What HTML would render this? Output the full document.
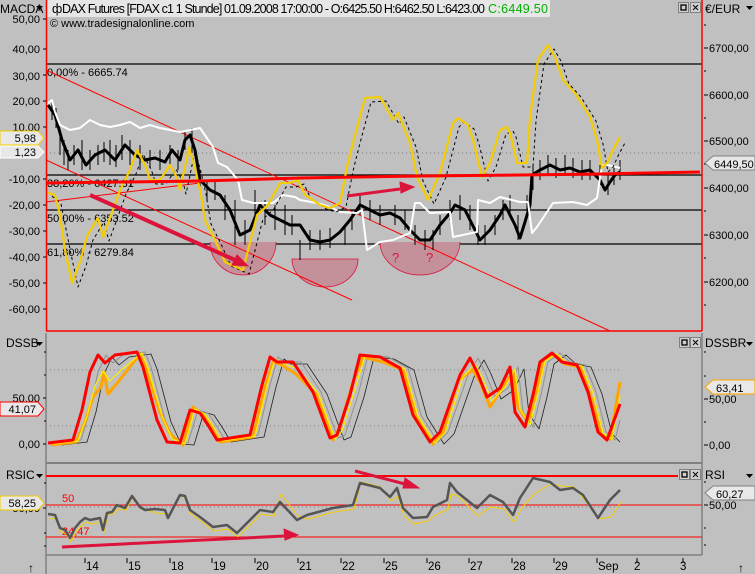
<!DOCTYPE html>
<html><head><meta charset="utf-8">
<style>
html,body{margin:0;padding:0;background:#c0c0c0;}
body{width:755px;height:574px;overflow:hidden;}
svg{display:block;font-family:"Liberation Sans",sans-serif;}
polyline{stroke-linejoin:round;}
</style></head>
<body>
<svg width="755" height="574" viewBox="0 0 755 574" xmlns="http://www.w3.org/2000/svg">
<rect width="755" height="574" fill="#c0c0c0"/>
<!-- header -->
<rect x="47" y="0" width="503" height="17" fill="#e6e6e6"/>
<text x="0" y="13" font-size="12">MACDA</text>
<path d="M36,6 h7 l-3.5,4z" fill="#000"/>
<text x="52" y="13" font-size="12.5">ф</text>
<text x="62" y="13" font-size="12.5" textLength="423" lengthAdjust="spacing">DAX Futures [FDAX c1  1 Stunde] 01.09.2008 17:00:00 - O:6425.50 H:6462.50 L:6423.00</text>
<text x="488" y="13" font-size="12.5" fill="#00b000" textLength="60" lengthAdjust="spacing">C:6449.50</text>
<g fill="#d0d0d0" stroke="#808080"><rect x="678.5" y="2.5" width="10" height="10"/><rect x="690.5" y="2.5" width="10" height="10"/></g>
<rect x="681" y="5" width="5" height="5" fill="none" stroke="#000" stroke-width="1.3"/>
<path d="M693,5 l5,5 M698,5 l-5,5" stroke="#000"/>
<text x="705" y="13" font-size="12">€/EUR</text>
<path d="M746,6 h7 l-3.5,4z" fill="#000"/>

<!-- main pane -->
<text x="50" y="27" font-size="11">© www.tradesignalonline.com</text>
<g stroke="#000" stroke-width="1.2">
<line x1="46" y1="64" x2="702" y2="64"/>
<line x1="46" y1="175" x2="702" y2="175"/>
<line x1="46" y1="210" x2="702" y2="210"/>
<line x1="46" y1="244" x2="702" y2="244"/>
</g>
<line x1="46" y1="153" x2="702" y2="153" stroke="#808080" stroke-dasharray="1,3"/>
<g font-size="11">
<text x="47" y="76">0,00% - 6665.74</text>
<text x="47" y="187">38,20% - 6427.31</text>
<text x="47" y="222">50,00% - 6353.52</text>
<text x="47" y="256">61,80% - 6279.84</text>
</g>
<g fill="#c4909a" stroke="#dc143c" stroke-width="0.8">
<path d="M210,242 A33,33 0 0 0 276,242"/>
<path d="M292,259 A33,28 0 0 0 358,259 Z"/>
<path d="M380,242 A40,33 0 0 0 460,242"/>
</g>
<text x="392" y="262" font-size="13" fill="#dc143c">?</text>
<text x="426" y="262" font-size="13" fill="#dc143c">?</text>
<g stroke="#ff0000" stroke-width="1" fill="none">
<line x1="46" y1="70" x2="610" y2="331"/>
<line x1="46" y1="160" x2="352" y2="300"/>
<line x1="46" y1="202" x2="200" y2="183"/>
</g>
<!-- price candles approx -->
<g stroke="#000" stroke-width="1">
<path d="M52,100v20M56,108v20M60,130v25M64,140v25M68,150v20M74,145v20M82,140v30M90,150v20M98,145v20M104,142v20M110,140v25M116,145v22M122,135v25M130,140v25M140,145v25M150,150v18M160,150v20M170,145v20M178,150v20M185,130v20M192,128v25M200,170v20M207,180v20M215,180v20M225,195v25M235,200v45M245,220v25M255,190v30M265,200v25M275,205v25M285,205v30M292,215v20M300,240v20M310,230v20M320,230v20M330,228v20M345,225v20M352,210v20M360,195v20M370,200v20M380,205v20M395,205v20M405,210v20M415,225v20M425,230v20M433,230v20M440,215v20M450,200v20M460,195v25M470,205v25M478,225v20M485,225v20M495,215v20M503,200v20M510,195v20M518,215v25M527,195v20M533,165v25M540,160v20M548,155v20M556,158v20M565,155v20M573,158v20M582,160v20M590,160v20M600,165v20M608,175v20M614,165v20M620,160v20"/>
</g>
<polyline fill="none" stroke="#000" stroke-width="3" points="48,105 55,115 62,140 70,160 78,150 86,165 95,155 105,150 115,160 125,145 135,155 145,160 155,158 165,162 172,150 180,160 185,140 190,135 195,150 200,180 210,190 220,195 230,210 240,235 250,230 260,205 270,215 280,220 290,225 300,225 310,240 320,242 330,240 340,232 350,220 360,205 370,210 380,215 390,213 400,218 410,230 420,240 430,240 440,225 450,213 455,205 465,210 470,220 480,240 490,230 500,215 505,205 515,225 520,238 525,222 530,205 532,175 540,170 550,165 560,170 570,168 580,172 590,170 600,180 605,190 610,182 615,175 620,172"/>
<!-- white line -->
<polyline fill="none" stroke="#fff" stroke-width="2" points="46,105 52,100 55,112 60,125 70,130 80,128 90,120 100,125 110,127 120,125 130,122 140,128 150,125 160,128 170,130 180,132 200,128 213,147 218,163 227,167 238,180 242,200 253,203 273,203 283,195 295,197 300,200 317,203 330,207 340,212 357,213 362,210 367,250 380,242 393,240 410,233 415,203 420,203 430,213 450,212 453,237 477,232 478,200 490,203 500,197 520,202 528,202 532,233 537,227 553,203 573,202 587,205 597,198 602,165 608,165 620,168"/>
<!-- macd yellow + dashed -->
<polyline fill="none" stroke="#000" stroke-width="1" stroke-dasharray="3,3" transform="translate(6,4)" points="46,192 55,200 65,250 72,283 80,262 87,236 98,218 103,237 110,218 120,190 130,170 137,150 145,165 150,180 160,180 170,165 177,178 180,190 189,147 195,168 200,190 205,220 215,240 225,262 243,270 257,215 268,205 280,183 290,183 298,180 305,195 313,200 320,205 330,208 340,203 347,167 353,143 365,98 380,97 393,120 398,113 410,143 417,177 428,200 440,173 453,123 458,118 468,125 473,140 482,177 490,163 500,130 507,127 510,133 517,163 527,163 530,117 538,60 548,45 555,57 563,80 575,93 590,117 597,140 602,168 607,163 613,150 620,137"/>
<polyline fill="none" stroke="#f5cc00" stroke-width="2.2" points="46,192 55,195 60,215 65,250 72,283 80,262 87,236 98,218 103,237 110,218 120,190 130,170 137,150 145,165 150,180 160,180 170,165 177,178 180,190 189,147 195,168 200,190 205,220 215,240 225,262 243,270 257,215 268,205 280,183 290,183 298,180 305,195 313,200 320,205 330,208 340,203 347,167 353,143 365,98 380,97 393,120 398,113 410,143 417,177 428,200 440,173 453,123 458,118 468,125 473,140 482,177 490,163 500,130 507,127 510,133 517,163 527,163 530,117 538,60 548,45 555,57 563,80 575,93 590,117 597,140 602,168 607,163 613,150 620,137"/>
<polyline fill="none" stroke="#ff0000" stroke-width="3" points="46,183 200,181 300,178 420,176 520,175 600,174 700,172"/>
<g stroke="#dc143c" stroke-width="4" fill="#dc143c">
<line x1="90" y1="195" x2="235" y2="260"/>
<path d="M248,266 l-16,-1 l5,-10z" stroke-width="1"/>
<line x1="347" y1="196" x2="400" y2="189" stroke-width="3"/>
<path d="M414,187 l-14,-5 l1,11z" stroke-width="1"/>
</g>
<g stroke="#ff0000" stroke-width="1.5" fill="none">
<line x1="46.5" y1="0" x2="46.5" y2="331"/>
<line x1="702" y1="0" x2="702" y2="331"/>
<line x1="46" y1="331" x2="702" y2="331"/>
</g>
<g font-size="11" text-anchor="end">
<text x="40" y="23">50,00</text><text x="40" y="53">40,00</text><text x="40" y="80">30,00</text>
<text x="40" y="105">20,00</text><text x="40" y="131">10,00</text><text x="40" y="183">-10,00</text>
<text x="40" y="209">-20,00</text><text x="40" y="235">-30,00</text><text x="40" y="261">-40,00</text>
<text x="40" y="287">-50,00</text><text x="40" y="313">-60,00</text>
</g>
<path d="M43,19h3M43,49h3M43,75h3M43,101h3M43,127h3M43,179h3M43,205h3M43,231h3M43,257h3M43,283h3M43,309h3" stroke="#000"/>
<path d="M0,131 h38 l6,7 l-6,7 h-38z" fill="#e8e8e8" stroke="#f5cc00"/>
<text x="36" y="142" font-size="11" text-anchor="end">5,98</text>
<path d="M0,146 h38 l6,6 l-6,6 h-38z" fill="#e8e8e8" stroke="#fff"/>
<text x="36" y="156" font-size="11" text-anchor="end">1,23</text>
<g font-size="11">
<text x="709" y="52">6700,00</text><text x="709" y="99">6600,00</text><text x="709" y="145">6500,00</text>
<text x="709" y="192">6400,00</text><text x="709" y="239">6300,00</text><text x="709" y="286">6200,00</text>
</g>
<path d="M704,48h4M704,95h4M704,141h4M704,188h4M704,235h4M704,282h4M704,25h2M704,71h2M704,118h2M704,164h2M704,211h2M704,258h2M704,305h2" stroke="#000"/>
<path d="M705,163 l8,-7 h42 v14 h-42z" fill="#e8e8e8" stroke="#808080"/>
<text x="714" y="168" font-size="11">6449,50</text>

<!-- DSSB pane -->
<line x1="46" y1="333" x2="46" y2="574" stroke="#808080" stroke-width="1.5"/>
<line x1="702" y1="333" x2="702" y2="555" stroke="#808080" stroke-width="1.5"/>
<line x1="46" y1="463" x2="702" y2="463" stroke="#808080" stroke-width="2"/>
<g stroke="#808080" stroke-dasharray="1,3"><line x1="46" y1="370" x2="620" y2="370"/><line x1="46" y1="426" x2="620" y2="426"/></g>
<text x="6" y="347" font-size="12">DSSB</text><path d="M36,342 h7 l-3.5,4z" fill="#000"/>
<text x="705" y="347" font-size="12">DSSBR</text><path d="M746,342 h7 l-3.5,4z" fill="#000"/>
<g fill="#d0d0d0" stroke="#808080"><rect x="679.5" y="337.5" width="10" height="10"/><rect x="690.5" y="337.5" width="10" height="10"/></g>
<rect x="682" y="340" width="5" height="5" fill="none" stroke="#000" stroke-width="1.3"/>
<path d="M693,340 l5,5 M698,340 l-5,5" stroke="#000"/>
<polyline fill="none" stroke="#202020" stroke-width="0.8" transform="translate(14,2)" points="48,443 73,440 82,410 90,372 98,355 105,363 115,355 137,352 143,367 157,420 167,442 180,443 190,410 200,413 208,425 217,440 250,435 262,385 270,357 277,362 293,362 313,392 330,438 337,435 350,395 360,355 380,357 400,368 413,415 430,442 440,432 460,375 470,358 477,372 487,397 500,388 510,367 515,412 525,427 533,395 540,362 552,353 562,362 577,365 588,392 598,432 606,440"/>
<polyline fill="none" stroke="#909090" stroke-width="1" transform="translate(8,0)" points="48,443 73,440 82,410 90,372 98,355 105,363 115,355 137,352 143,367 157,420 167,442 180,443 190,410 200,413 208,425 217,440 250,435 262,385 270,357 277,362 293,362 313,392 330,438 337,435 350,395 360,355 380,357 400,368 413,415 430,442 440,432 460,375 470,358 477,372 487,397 500,388 510,367 515,412 525,427 533,395 540,362 552,353 562,362 577,365 588,392 598,432 607,440 612,420"/>
<polyline fill="none" stroke="#ffa500" stroke-width="3" transform="translate(3,2)" points="48,443 73,440 82,420 90,395 98,385 101,370 105,392 115,380 137,352 143,367 157,410 167,432 180,443 190,405 200,413 208,425 217,440 250,435 262,385 270,360 277,362 293,372 313,392 330,438 337,425 350,380 360,355 380,360 400,368 413,415 430,442 440,430 455,378 470,368 477,380 487,405 500,385 510,370 515,405 525,420 533,390 540,358 552,353 562,362 577,365 588,395 598,432 607,437 617,380"/>
<polyline fill="none" stroke="#ffee00" stroke-width="1.2" transform="translate(5,1)" points="48,443 73,440 82,415 90,385 98,370 105,380 115,370 137,352 143,367 157,415 167,438 180,443 190,408 200,413 208,425 217,440 250,435 262,385 270,358 277,362 293,368 313,392 330,438 337,430 350,388 360,355 380,358 400,368 413,415 430,442 440,432 458,376 470,363 477,376 487,400 500,386 510,368 515,408 525,424 533,392 540,360 552,353 562,362 577,365 588,392 598,432 607,438 615,395"/>
<polyline fill="none" stroke="#ff0000" stroke-width="3" points="48,443 73,440 82,410 90,372 98,355 105,363 115,355 137,352 143,367 157,420 167,442 180,443 190,410 200,413 208,425 217,440 250,435 262,385 270,357 277,362 293,362 313,392 330,438 337,435 350,395 360,355 380,357 400,368 413,415 430,442 440,432 460,375 470,358 477,372 487,397 500,388 510,367 515,412 525,427 533,395 540,362 552,353 562,362 577,365 588,392 598,432 607,440 620,404"/>
<g font-size="11" text-anchor="end"><text x="40" y="402">50,00</text><text x="40" y="448">0,00</text></g>
<path d="M43,398h3M43,444h3M44,352h2M44,375h2M44,421h2" stroke="#000"/>
<path d="M0,402 h38 l6,7 l-6,7 h-38z" fill="#e8e8e8" stroke="#ff0000"/>
<text x="36" y="413" font-size="11" text-anchor="end">41,07</text>
<g font-size="11"><text x="709" y="403">50,00</text><text x="709" y="449">0,00</text></g>
<path d="M704,399h4M704,445h4M704,352h2M704,376h2M704,422h2" stroke="#000"/>
<path d="M705,387 l8,-7 h42 v14 h-42z" fill="#e8e8e8" stroke="#ffa500"/>
<text x="716" y="392" font-size="11">63,41</text>

<!-- RSI pane -->
<text x="6" y="479" font-size="12">RSIC</text><path d="M36,474 h7 l-3.5,4z" fill="#000"/>
<text x="705" y="479" font-size="12">RSI</text><path d="M746,474 h7 l-3.5,4z" fill="#000"/>
<g fill="#d0d0d0" stroke="#808080"><rect x="679.5" y="469.5" width="10" height="10"/><rect x="690.5" y="469.5" width="10" height="10"/></g>
<rect x="682" y="472" width="5" height="5" fill="none" stroke="#000" stroke-width="1.3"/>
<path d="M693,472 l5,5 M698,472 l-5,5" stroke="#000"/>
<line x1="46" y1="476" x2="678" y2="476" stroke="#ff0000" stroke-width="2"/>
<line x1="46" y1="505" x2="702" y2="505" stroke="#ff0000" stroke-width="1"/>
<line x1="46" y1="507" x2="620" y2="507" stroke="#808080" stroke-dasharray="1,3"/>
<line x1="46" y1="537" x2="702" y2="537" stroke="#ff0000" stroke-width="1"/>
<text x="62" y="502" font-size="11" fill="#ff0000">50</text>
<text x="62" y="535" font-size="11" fill="#ff0000">24,47</text>
<polyline fill="none" stroke="#f5cc00" stroke-width="1" transform="translate(1,4)" points="48,514 55,515 60,528 65,530 70,538 75,528 80,522 85,518 90,520 100,518 103,528 107,510 112,510 117,505 125,506 132,492 140,505 145,506 155,509 165,510 168,512 180,490 185,496 190,510 200,517 213,527 227,525 237,533 260,510 273,512 280,490 297,512 307,515 333,508 353,505 360,478 380,483 390,497 397,492 403,512 413,520 427,517 433,512 447,505 450,490 457,492 477,512 490,503 503,505 513,518 520,505 533,490 550,480 560,482 573,483 583,495 598,515 610,513 620,498"/>
<polyline fill="none" stroke="#555" stroke-width="2.5" points="48,514 55,515 60,528 65,530 70,538 75,528 80,522 85,518 90,520 100,518 103,530 107,513 112,512 117,505 125,508 132,496 140,507 145,510 155,509 165,510 168,518 180,495 185,496 190,510 200,517 213,527 227,525 237,533 260,510 273,512 280,502 297,520 307,515 333,508 353,505 360,483 380,488 390,497 397,488 403,508 413,518 427,517 433,507 447,500 450,483 457,492 477,508 490,495 503,502 513,515 520,498 533,478 550,482 560,490 573,488 583,495 598,518 610,500 620,490"/>
<g stroke="#dc143c" stroke-width="3" fill="#dc143c">
<line x1="62" y1="547" x2="285" y2="536"/>
<path d="M298,535 l-14,-6 l1,11z" stroke-width="1"/>
<line x1="355" y1="471" x2="405" y2="484"/>
<path d="M419,488 l-14,-10 l-2,10z" stroke-width="1"/>
</g>
<g font-size="11" text-anchor="end"><text x="40" y="512">50,00</text></g>
<path d="M43,508h3M44,483h2M44,533h2M44,546h2" stroke="#000"/>
<path d="M0,496 h38 l6,7 l-6,7 h-38z" fill="#e8e8e8" stroke="#f5cc00"/>
<text x="36" y="507" font-size="11" text-anchor="end">58,25</text>
<g font-size="11"><text x="709" y="509">50,00</text></g>
<path d="M704,505h4M704,482h2M704,528h2M704,545h2" stroke="#000"/>
<path d="M705,493 l8,-7 h42 v14 h-42z" fill="#e8e8e8" stroke="#808080"/>
<text x="716" y="498" font-size="11">60,27</text>

<!-- bottom axis -->
<line x1="46" y1="555" x2="702" y2="555" stroke="#808080" stroke-width="1.5"/>
<g stroke="#000"><path d="M85,558v5M127,558v5M170,558v5M212,558v5M255,558v5M298,558v5M341,558v5M384,558v5M427,558v5M469,558v5M512,558v5M554,558v5M597,558v5M637,558v5M683,558v5"/></g>
<g font-size="11.5">
<text x="86" y="570">14</text><text x="128" y="570">15</text><text x="171" y="570">18</text>
<text x="213" y="570">19</text><text x="256" y="570">20</text><text x="299" y="570">21</text>
<text x="342" y="570">22</text><text x="385" y="570">25</text><text x="428" y="570">26</text>
<text x="470" y="570">27</text><text x="513" y="570">28</text><text x="555" y="570">29</text>
<text x="598" y="570">Sep</text><text x="634" y="570">2</text><text x="680" y="570">3</text>
</g>
<text x="28" y="572" font-size="12">↑</text>
<text x="738" y="572" font-size="12">↑</text>
</svg>
</body></html>
